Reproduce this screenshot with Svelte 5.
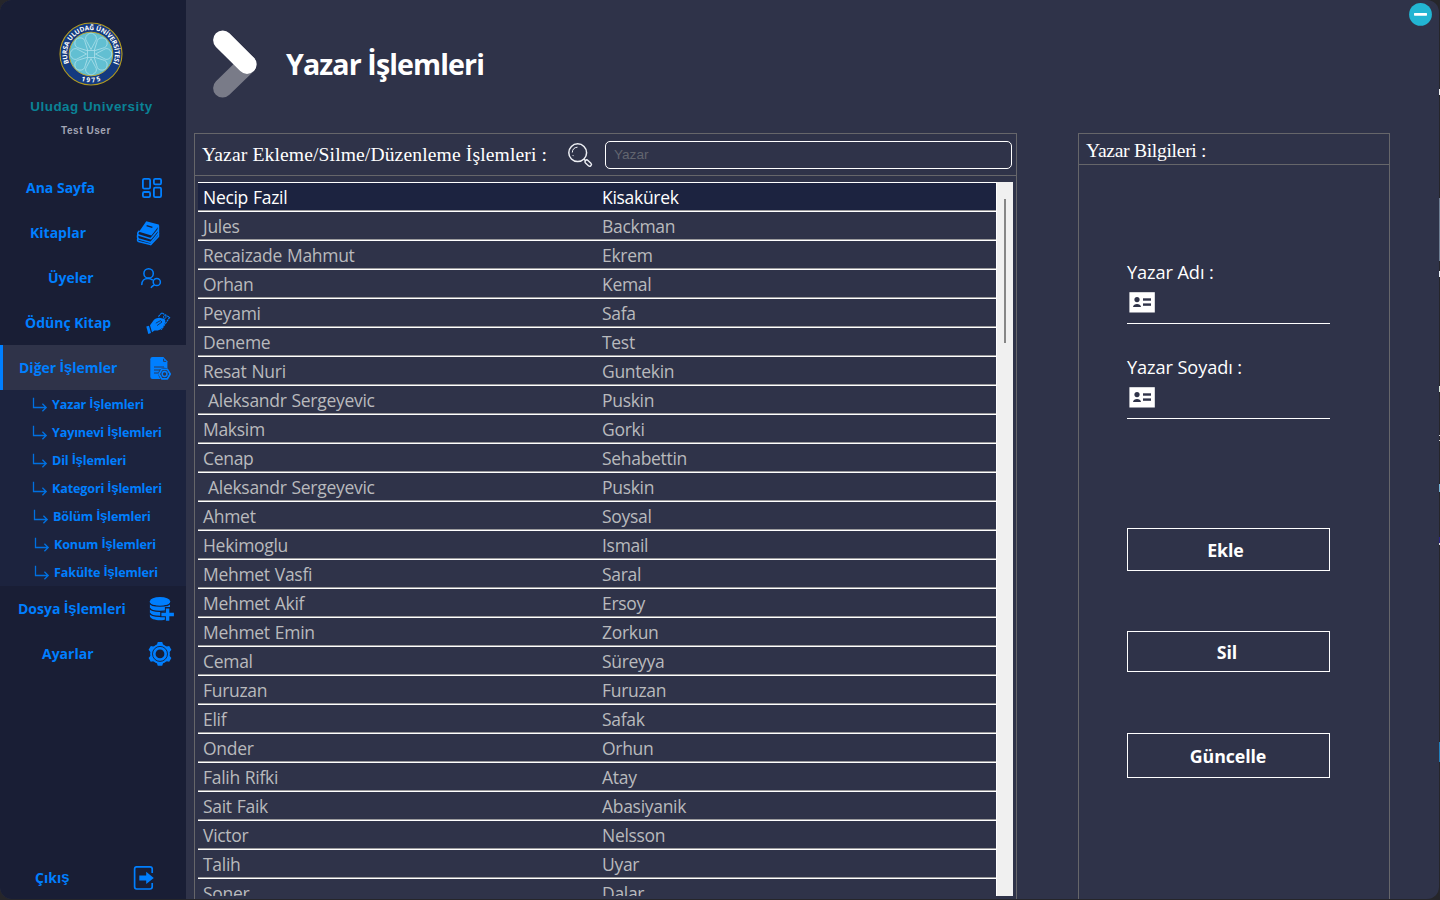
<script>
  const menu = [
    { label: 'Ana Sayfa', x: 26, icon: 'grid' },
    { label: 'Kitaplar', x: 30, icon: 'books' },
    { label: 'Üyeler', x: 48, icon: 'users' },
    { label: 'Ödünç Kitap', x: 25, icon: 'hand' },
    { label: 'Diğer İşlemler', x: 19, icon: 'doc', active: true },
  ];
  const submenu = [
    { label: 'Yazar İşlemleri', x: 32 },
    { label: 'Yayınevi İşlemleri', x: 32 },
    { label: 'Dil İşlemleri', x: 32 },
    { label: 'Kategori İşlemleri', x: 32 },
    { label: 'Bölüm İşlemleri', x: 33 },
    { label: 'Konum İşlemleri', x: 34 },
    { label: 'Fakülte İşlemleri', x: 34 },
  ];
  const tail = [
    { label: 'Dosya İşlemleri', x: 18, icon: 'db' },
    { label: 'Ayarlar', x: 42, icon: 'gear' },
  ];
  const exit = { label: 'Çıkış', x: 35, icon: 'exit' };
  const authors = [
    ['Necip Fazil', 'Kisakürek'],
    ['Jules', 'Backman'],
    ['Recaizade Mahmut', 'Ekrem'],
    ['Orhan', 'Kemal'],
    ['Peyami', 'Safa'],
    ['Deneme', 'Test'],
    ['Resat Nuri', 'Guntekin'],
    [' Aleksandr Sergeyevic', 'Puskin'],
    ['Maksim', 'Gorki'],
    ['Cenap', 'Sehabettin'],
    [' Aleksandr Sergeyevic', 'Puskin'],
    ['Ahmet', 'Soysal'],
    ['Hekimoglu', 'Ismail'],
    ['Mehmet Vasfi', 'Saral'],
    ['Mehmet Akif', 'Ersoy'],
    ['Mehmet Emin', 'Zorkun'],
    ['Cemal', 'Süreyya'],
    ['Furuzan', 'Furuzan'],
    ['Elif', 'Safak'],
    ['Onder', 'Orhun'],
    ['Falih Rifki', 'Atay'],
    ['Sait Faik', 'Abasiyanik'],
    ['Victor', 'Nelsson'],
    ['Talih', 'Uyar'],
    ['Soner', 'Dalar'],
  ];
  const fields = ['Yazar Adı :', 'Yazar Soyadı :'];
  const petals = [0, 45, 90, 135, 180, 225, 270, 315];
  const teeth = [0, 60, 120, 180, 240, 300];
  const parts = (s) => s.split(/([İş]+)/);
</script>

{#snippet words(label)}
  {#each parts(label) as p, i}{#if i % 2}<span class="alt">{p}</span>{:else}{p}{/if}{/each}
{/snippet}

{#snippet item(m)}
  <a class="item" class:active={m.active}>
    <span class="label" style="padding-left:{m.x}px">{@render words(m.label)}</span>
    <svg class="icon" width="56" height="45" viewBox="130 0 56 45">
      {#if m.icon === 'grid'}
        <g fill="none" stroke="#007fff" stroke-width="1.8">
          <rect x="142.9" y="13.9" width="7.2" height="9.7" rx="1.4" />
          <rect x="153.9" y="13.9" width="7.2" height="5.4" rx="1.4" />
          <rect x="142.9" y="27" width="7.2" height="5.2" rx="1.4" />
          <rect x="153.9" y="22.7" width="7.2" height="9.5" rx="1.4" />
        </g>
      {:else if m.icon === 'books'}
        <path d="M146.3 11.2 L158.6 14.6 Q159.4 15 158.8 15.9 L151.5 25.6 L139 21.7 Z" fill="#007fff" />
        <path d="M146.6 15.6 L152.4 17.4" stroke="#191e35" stroke-width="1.3" />
        <g fill="none" stroke="#007fff" stroke-width="1.6" stroke-linejoin="round">
          <path d="M139.4 20.8 Q136.6 23.4 138.4 25 L150.8 28.8 L158.4 19.4 V15.5" />
          <path d="M138 24 Q136.8 27.6 138.5 28.9 L150.8 32.4 L158.4 23.2 V19.4" />
          <path d="M138 28 Q137 31 138.5 31.4 L150.6 34.6 L158.4 26.4 V23" />
        </g>
      {:else if m.icon === 'users'}
        <g fill="none" stroke="#007fff" stroke-width="1.5" stroke-linecap="round">
          <circle cx="148.6" cy="18.4" r="4.7" />
          <path d="M141.8 29.6 C141.8 26 144.4 23.4 148 23.4 Q150.5 23.4 152.4 24.8" />
          <circle cx="156.8" cy="27" r="3.6" />
          <path d="M151.3 32.4 Q152.2 30.8 154 30.2" />
        </g>
      {:else if m.icon === 'hand'}
        <path d="M146.3 26.6 L149 25.8 L151 33 L148.3 34 Z" fill="#007fff" />
        <path d="M150 25.2 L154 19.8 Q155.3 18.2 159 17.8 L164.2 18.8 Q166 20 165.2 22.4 Q163.8 27 160.4 29.4 Q158 30.6 154.5 30.6 L152 32.3 Z" fill="#007fff" />
        <path d="M155.8 23.2 L160.5 20.6 L162 22 L157 25.6" fill="none" stroke="#191e35" stroke-width="0.7" />
        <path d="M158.4 16.6 L161.8 12.8 L169.6 17.4 L161.2 29.8" fill="none" stroke="#007fff" stroke-width="1.1" stroke-dasharray="2.2 .6" />
        <circle cx="164.8" cy="17" r="1.4" fill="none" stroke="#007fff" stroke-width="0.8" />
      {:else if m.icon === 'doc'}
        <path d="M152.5 12 H163.4 L167.4 16.2 V34 H152.5 Q150.3 34 150.3 31.8 V14.2 Q150.3 12 152.5 12Z" fill="#007fff" />
        <path d="M163.6 13.8 V16.4 H166.2" fill="none" stroke="#2f3349" stroke-width="0.9" />
        <path d="M154 22 H164 M154 25 H160 M154 28 H158.5" stroke="#2f3349" stroke-width="0.9" />
        <circle cx="164.6" cy="29" r="6.3" fill="#2f3349" />
        <path d="M161.8 24.4 H167.4 L170.2 29 L167.4 33.8 H161.8 L159.1 29 Z" fill="none" stroke="#007fff" stroke-width="1.7" stroke-linejoin="round" />
        <circle cx="164.6" cy="29" r="2.4" fill="none" stroke="#007fff" stroke-width="1.5" />
      {:else if m.icon === 'db'}
        <path d="M149.9 15.5 V30 C150 35.6 170 35.6 170 30 V15.5 Z" fill="#007fff" />
        <path d="M149.7 17 C151 21.2 169 21.2 170.3 17 M149.7 22 C151 26.4 169 26.4 170.3 22 M149.7 27 C151 31.4 169 31.4 170.3 27" fill="none" stroke="#191e35" stroke-width="1.2" />
        <ellipse cx="160" cy="15.2" rx="10.1" ry="4.2" fill="#007fff" />
        <path d="M167.6 21 V36 M160.2 28.5 H175" stroke="#191e35" stroke-width="5.4" />
        <path d="M167.6 22.4 V34.8 M161.4 28.5 H173.9" stroke="#007fff" stroke-width="3.4" />
      {:else if m.icon === 'gear'}
        <g fill="#007fff">
          <circle cx="160" cy="22.9" r="9.9" />
          {#each teeth as t}
            <path d="M156.6 14.5 L157.8 11 H162.2 L163.4 14.5 Z" transform="rotate({t} 160 22.9)" />
          {/each}
        </g>
        <circle cx="160" cy="22.9" r="7.5" fill="none" stroke="#191e35" stroke-width="0.9" />
        <circle cx="160" cy="22.9" r="4.4" fill="#191e35" />
      {:else}
        <path d="M152.2 18 V14 Q152.2 11.9 150 11.9 H136.6 Q134.6 11.9 134.6 14 V31.8 Q134.6 34 136.6 34 H150 Q152.2 34 152.2 31.8 V28" fill="none" stroke="#007fff" stroke-width="1.7" />
        <path d="M139.3 20.4 H146.2 V16.8 L153.8 22.9 L146.2 29 V25.4 H139.3 Z" fill="#007fff" />
      {/if}
    </svg>
  </a>
{/snippet}

<div class="desktop">
  <div class="window">
    <aside>
      <div class="brand">
        <svg width="64" height="64" viewBox="0 0 64 64">
          <circle cx="32" cy="32" r="31" fill="#143a80" stroke="#b39b1f" stroke-width="1.1" />
          <circle cx="32" cy="32" r="21.8" fill="#62bfd2" stroke="#b8a83a" stroke-width="1" />
          <g fill="none" stroke="#a5dce8" stroke-width="0.9">
            {#each petals as r}
              <path d="M32 27.5 L27.8 19.6 A5.2 5.2 0 1 1 36.2 19.6 Z" transform="rotate({r} 32 32)" />
            {/each}
            <rect x="28.5" y="28.5" width="7" height="7" />
          </g>
          <path id="arcTop" d="M10.94 43.2 A23.9 23.9 0 1 1 53.06 43.2" fill="none" />
          <path id="arcBottom" d="M14 50.3 A28.9 28.9 0 0 0 50 50.3" fill="none" transform="translate(0 3.7)" />
          <text class="seal"><textPath href="#arcTop" startOffset="50%" text-anchor="middle" textLength="94">BURSA ULUDAĞ ÜNİVERSİTESİ</textPath></text>
          <text class="year"><textPath href="#arcBottom" startOffset="52%" text-anchor="middle">1975</textPath></text>
        </svg>
        <div class="org">Uludag University</div>
        <div class="user">Test User</div>
      </div>
      <nav>
        {#each menu as m}{@render item(m)}{/each}
        <div class="sub">
          {#each submenu as s}
            <a class="subitem" style="padding-left:{s.x}px">
              <svg width="16" height="16" viewBox="0 0 16 16" fill="none" stroke="#0070e0" stroke-width="1.3">
                <path d="M1.5 0.8 V10.5 H14.2 M10.4 6.7 L14.2 10.5 L10.4 14.3" />
              </svg>
              <span>{@render words(s.label)}</span>
            </a>
          {/each}
        </div>
        {#each tail as m}{@render item(m)}{/each}
      </nav>
      <div class="bottom">{@render item(exit)}</div>
    </aside>

    <main>
      <header>
        <svg width="46" height="70" viewBox="212 29 46 70" fill="none" stroke-width="19.2" stroke-linecap="round">
          <path d="M222.7 88 L247 64.3" stroke="#797b88" />
          <path d="M222.7 40.1 L247 64.3" stroke="#fff" />
        </svg>
        <h1>Yazar İşlemleri</h1>
      </header>
      <div class="panels">
        <section class="list">
          <div class="listhead">
            <h2>Yazar Ekleme/Silme/Düzenleme İşlemleri :</h2>
            <svg width="28" height="28" viewBox="0 0 28 28" fill="none" stroke="#eef0f5">
              <circle cx="11.7" cy="11.7" r="8.9" stroke-width="1.5" />
              <path d="M6.3 11.5 A5.6 5.6 0 0 1 11.5 6.2" stroke-width="1" />
              <path d="M6.8 14.1 L7.4 15.1" stroke-width="1" />
              <path d="M18 18.2 L20 20" stroke-width="1.4" />
              <rect x="18.5" y="20.3" width="7.4" height="3.6" rx="1.7" transform="rotate(43 22.2 22.1)" stroke-width="1.4" />
            </svg>
            <input placeholder="Yazar" />
          </div>
          <div class="tablewrap">
            <div class="table">
              {#each authors as a, i}
                <div class="row" class:selected={i === 0}>
                  <span>{a[0]}</span><span>{a[1]}</span>
                </div>
              {/each}
            </div>
            <div class="scroll"><div class="thumb"></div></div>
          </div>
        </section>

        <section class="info">
          <h2>Yazar Bilgileri :</h2>
          <div class="form">
            {#each fields as f}
              <div class="field">
                <label>{f}</label>
                <svg width="26" height="21" viewBox="0 0 26 21">
                  <rect x="0.4" y="0.2" width="25.4" height="20.3" fill="#fff" />
                  <g fill="#2f3349">
                    <circle cx="8" cy="7.6" r="2.6" />
                    <path d="M4 15 C4.2 10.9 11.8 10.9 12 15 Z" />
                    <rect x="14" y="6.3" width="8" height="2.4" />
                    <rect x="14" y="11.4" width="8" height="2.4" />
                  </g>
                </svg>
              </div>
            {/each}
            <button class="add">Ekle</button>
            <button class="del">Sil</button>
            <button class="upd">Güncelle</button>
          </div>
        </section>
      </div>
      <button class="min" aria-label="Küçült">
        <svg width="24" height="24" viewBox="0 0 24 24">
          <circle cx="12.5" cy="12.4" r="11.4" fill="#22b5d3" />
          <rect x="6" y="11.1" width="13" height="2.6" rx=".6" fill="#fff" />
        </svg>
      </button>
    </main>
  </div>
</div>

<style>
  :global(body) { overflow: hidden; }
  .desktop {
    width: 1440px; height: 900px; box-sizing: border-box;
    padding: 0 1px 1px 0;
    font-family: "Open Sans", "Noto Sans", sans-serif;
    background: linear-gradient(#26262a 89px, #eee 89px 95px, #26262a 95px 198px, #6f7f92 198px 261px, #26262a 261px 271px, #e8eef5 271px 277px, #26262a 277px 386px, #d8e8d8 386px 392px, #26262a 392px 435px, #ddd 435px 436px, #26262a 436px 440px, #ddd 440px 441px, #26262a 441px 484px, #73b4d4 484px 492px, #26262a 492px 537px, #2b2380 537px 543px, #ddd 543px 545px, #26262a 545px 742px, #1f7fbb 742px 762px, #26262a 762px);
  }
  .window {
    width: 1439px; height: 899px; display: flex; overflow: hidden;
    border-radius: 12px; background: #2f3349; position: relative;
  }
  aside { width: 186px; flex: none; background: #191e35; display: flex; flex-direction: column; }
  .brand { height: 165px; display: flex; flex-direction: column; align-items: center; box-sizing: border-box; padding: 22px 3px 0 0; font-family: "Liberation Sans", Arial, sans-serif; }
  .brand svg { flex: none; margin-right: 1px; }
  .seal { font: bold 6.6px "Open Sans", sans-serif; fill: #fff; }
  .year { font: bold 6.6px "Open Sans", sans-serif; fill: #fff; letter-spacing: 1.6px; }
  .org { margin-top: 13px; line-height: 16px; font-size: 13.4px; font-weight: bold; letter-spacing: .5px; color: #0a8296; white-space: nowrap; }
  .user { margin: 10px 11px 0 0; line-height: 12px; font-size: 10px; font-weight: bold; letter-spacing: .55px; color: #a2a5b4; }
  nav { flex: 1; }
  .item { display: grid; grid-template-columns: 130px 56px; height: 45px; align-items: center; color: #007fff; font-size: 14px; font-weight: bold; }
  .item.active { background: #2f3349; box-shadow: inset 3px 0 #007fff; }
  .label { white-space: nowrap; letter-spacing: 0; }
  .icon { display: block; }
  .alt { font-family: "Liberation Sans", Arial, sans-serif; font-size: 1.06em; line-height: 1; position: relative; top: -1px; }
  .sub { background: #1c233e; }
  .subitem { height: 28px; box-sizing: border-box; display: flex; align-items: center; gap: 4px; color: #007fff; font-size: 12.6px; font-weight: bold; letter-spacing: -.15px; white-space: nowrap; }
  .subitem .alt { margin-left: .3px; }
  .subitem svg { flex: none; margin-top: 2px; }
  .bottom { height: 44px; }

  main { flex: 1; min-width: 0; display: flex; flex-direction: column; }
  header { height: 133px; flex: none; box-sizing: border-box; padding: 29px 0 0 26px; display: flex; gap: 28px; }
  h1 { margin: 0; font-size: 28.6px; line-height: 69px; color: #fff; letter-spacing: -.9px; font-weight: bold; white-space: nowrap; }
  .panels { flex: 1; min-height: 0; display: flex; gap: 61px; padding-left: 8px; }
  section { box-sizing: border-box; border: 1px solid #66666a; border-bottom: 0; }
  .list { width: 823px; display: flex; flex-direction: column; min-height: 0; }
  h2 { margin: 0; font: 400 19.6px/30px "Liberation Serif", Georgia, serif; color: #fff; white-space: nowrap; }
  .listhead { height: 42px; flex: none; box-sizing: border-box; border-bottom: 1px solid #66666a; display: flex; align-items: center; padding: 0 4px 0 7px; }
  .listhead h2 { width: 364px; letter-spacing: .12px; }
  .listhead svg { flex: none; margin-right: 11px; }
  input { flex: 1; height: 28px; box-sizing: border-box; margin: 0; padding: 0 8px; background: transparent; border: 1px solid #fff; border-radius: 5px; color: #fff; font: 13.6px "Liberation Sans", Arial, sans-serif; outline: none; }
  input::placeholder { color: #62656f; opacity: 1; }
  .tablewrap { flex: 1; min-height: 0; display: flex; margin: 6px 3px 3px 3px; }
  .table { width: 798px; overflow: hidden; border-top: 1px solid #fff; }
  .row { height: 29px; box-sizing: border-box; border-bottom: 1px solid #fff; box-shadow: inset 0 -1px #9b9b9d; display: grid; grid-template-columns: 399px 1fr; padding-left: 5px; font-size: 17.5px; line-height: 28px; letter-spacing: -.3px; word-spacing: .8px; color: #b9babd; white-space: pre; }
  .row.selected { background: #1c2340; color: #fff; }
  .scroll { width: 17px; box-sizing: border-box; background: #f0f0f0; border-left: 1px solid #fff; padding: 17px 0 0 7px; }
  .thumb { width: 2px; height: 144px; background: #868686; }

  .info { width: 312px; }
  .info h2 { height: 31px; padding: 2px 0 0 7px; box-sizing: border-box; border-bottom: 1px solid #66666a; letter-spacing: -.3px; }
  .form { padding: 95px 59px 0 48px; display: flex; flex-direction: column; }
  .field { height: 64px; box-sizing: border-box; border-bottom: 1px solid #fff; margin-bottom: 31px; display: flex; flex-direction: column; }
  label { font-size: 18.2px; line-height: 25px; color: #fff; letter-spacing: -.1px; }
  .field svg { margin: 7px 0 0 2px; }
  .form button { box-sizing: border-box; background: transparent; border: 1px solid #fff; color: #fff; font: bold 17.8px "Open Sans", sans-serif; padding: 0; letter-spacing: -.1px; }
  .form .add { height: 43px; margin-top: 78px; padding-right: 6px; }
  .form .del { height: 41px; margin-top: 60px; padding-right: 3px; }
  .form .upd { height: 45px; margin-top: 61px; padding-right: 1px; }
  .min { position: absolute; top: 2px; right: 7px; border: 0; padding: 0; background: none; height: 24px; }
  .min svg { display: block; }
</style>
